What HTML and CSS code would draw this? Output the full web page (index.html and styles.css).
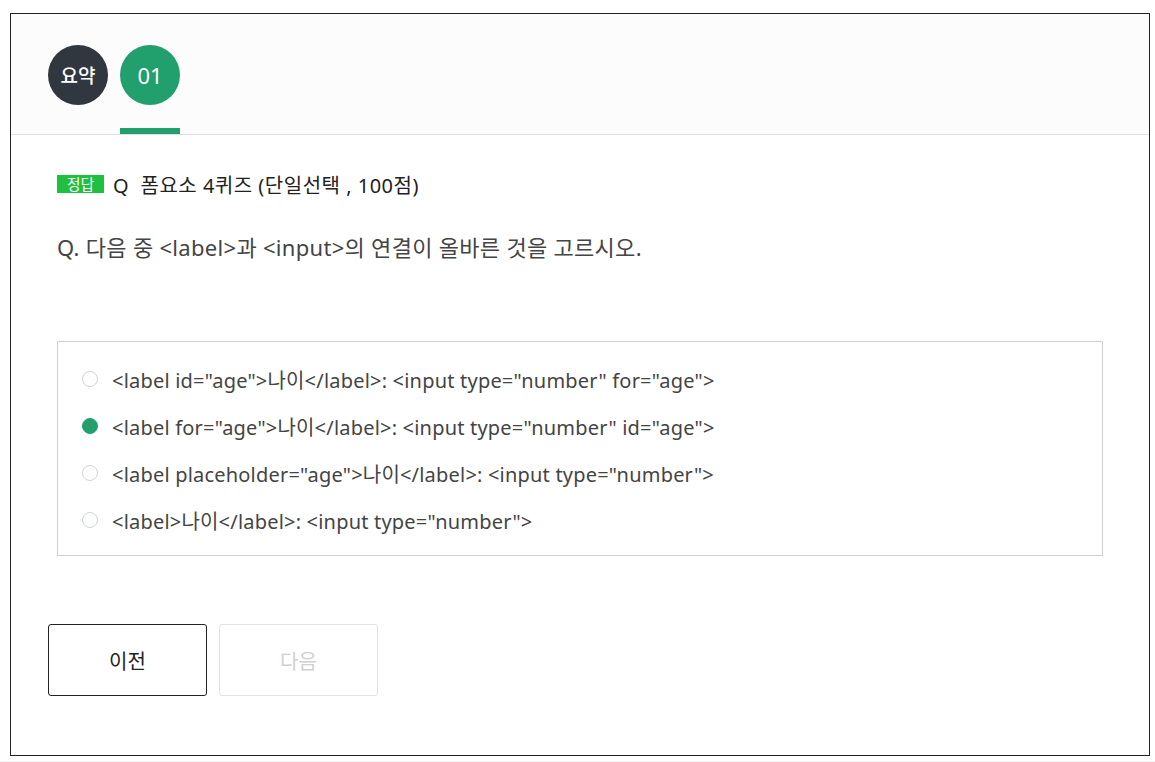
FILE: index.html
```html
<!DOCTYPE html>
<html lang="ko">
<head>
<meta charset="utf-8">
<link rel="stylesheet" href="styles.css">
</head>
<body>
<div class="quiz">
  <div class="tabs">
    <div class="tab">
      <div class="circle dark">요약</div>
    </div>
    <div class="tab active">
      <div class="circle green">01</div>
      <div class="bar"></div>
    </div>
  </div>
  <div class="content">
    <div class="title"><span class="badge">정답</span><span class="qtitle">Q&nbsp;&nbsp;폼요소 4퀴즈 (단일선택 , 100점)</span></div>
    <div class="question">Q. 다음 중 &lt;label&gt;과 &lt;input&gt;의 연결이 올바른 것을 고르시오.</div>
    <div class="options">
      <div class="opt"><span class="radio"></span><span>&lt;label id="age"&gt;나이&lt;/label&gt;: &lt;input type="number" for="age"&gt;</span></div>
      <div class="opt"><span class="radio on"></span><span>&lt;label for="age"&gt;나이&lt;/label&gt;: &lt;input type="number" id="age"&gt;</span></div>
      <div class="opt"><span class="radio"></span><span>&lt;label placeholder="age"&gt;나이&lt;/label&gt;: &lt;input type="number"&gt;</span></div>
      <div class="opt"><span class="radio"></span><span>&lt;label&gt;나이&lt;/label&gt;: &lt;input type="number"&gt;</span></div>
    </div>
    <div class="buttons">
      <button class="btn prev">이전</button>
      <button class="btn next" disabled>다음</button>
    </div>
  </div>
</div>
<div class="footer-line"></div>
</body>
</html>
```
FILE: styles.css
```css
html, body {
  margin: 0;
  padding: 0;
  background: #fff;
  font-family: "Noto Sans", "Noto Sans CJK KR", sans-serif;
}
.quiz {
  margin: 13px 0 0 10px;
  width: 1138px;
  height: 741px;
  border: 1px solid #222;
  display: flex;
  flex-direction: column;
}
.tabs {
  background: #fcfcfc;
  border-bottom: 1px solid #e0e0e0;
  display: flex;
  gap: 12px;
  padding-left: 37px;
  box-sizing: border-box;
  height: 121px;
}
.tab {
  width: 60px;
  padding-top: 31px;
  display: flex;
  flex-direction: column;
  justify-content: space-between;
}
.circle {
  width: 60px;
  height: 60px;
  border-radius: 50%;
  color: #fff;
  display: flex;
  align-items: center;
  justify-content: center;
  font-size: 19px;
  font-weight: 500;
}
.circle.dark { background: #30373f; }
.circle.green { background: #21a06e; font-weight: 400; font-size: 22px; }
.bar {
  height: 6px;
  background: #21a06e;
}
.content {
  padding: 0 0 0 46px;
}
.title {
  margin-top: 39px;
  display: flex;
  align-items: center;
  height: 20px;
  color: #222;
}
.badge {
  background: #1fbf3f;
  color: #fff;
  font-size: 15px;
  height: 18px;
  line-height: 18px;
  width: 47px;
  text-align: center;
  margin-right: 9px;
  flex: none;
}
.qtitle {
  font-size: 20px;
  letter-spacing: 0.5px;
}
.question {
  margin-top: 39px;
  font-size: 22px;
  color: #444;
  line-height: 28px;
  letter-spacing: 0.3px;
}
.options {
  margin-top: 80px;
  width: 1046px;
  height: 215px;
  box-sizing: border-box;
  border: 1px solid #cfcfcf;
  padding: 23px 0 0 24px;
  display: flex;
  flex-direction: column;
  gap: 19px;
}
.opt {
  display: flex;
  align-items: center;
  height: 28px;
  font-size: 20px;
  color: #444;
  gap: 14px;
  letter-spacing: 0.2px;
}
.radio {
  width: 16px;
  height: 16px;
  box-sizing: border-box;
  border: 1px solid #cfd4d9;
  border-radius: 50%;
  background: #fff;
  flex: none;
}
.radio.on {
  background: #21a06e;
  border-color: #21a06e;
}
.buttons {
  margin-top: 68px;
  margin-left: -9px;
  display: flex;
  gap: 12px;
}
.btn {
  width: 159px;
  height: 72px;
  background: #fff;
  border-radius: 3px;
  font-family: inherit;
  font-size: 20px;
}
.btn.prev {
  border: 1px solid #222;
  color: #222;
}
.btn.next {
  border: 1px solid #e2e2e2;
  color: #d0d0d0;
}
.footer-line {
  margin-top: 5px;
  height: 2px;
  background: #f0f0f0;
}
```
